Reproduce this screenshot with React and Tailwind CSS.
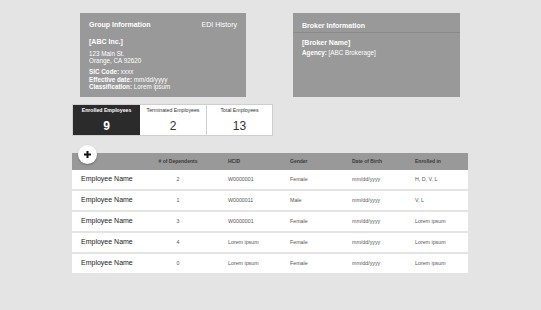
import React from "react";

const rows = [
  { dep: "2", hcid: "W0000001", gender: "Female", dob: "mm/dd/yyyy", enr: "H, D, V, L" },
  { dep: "1", hcid: "W0000011", gender: "Male", dob: "mm/dd/yyyy", enr: "V, L" },
  { dep: "3", hcid: "W0000001", gender: "Female", dob: "mm/dd/yyyy", enr: "Lorem ipsum" },
  { dep: "4", hcid: "Lorem ipsum", gender: "Female", dob: "mm/dd/yyyy", enr: "Lorem ipsum" },
  { dep: "0", hcid: "Lorem ipsum", gender: "Female", dob: "mm/dd/yyyy", enr: "Lorem ipsum" },
];

export default function App() {
  return (
    <div
      className="w-full h-[310px] bg-[#e4e4e4] overflow-hidden"
      style={{ fontFamily: '"Liberation Sans", Arial, sans-serif' }}
    >
      <div className="ml-[72px] w-[396px] pt-[13px]">
        {/* Top cards */}
        <div className="flex ml-[8px] gap-[47px]">
          <div className="w-[166px] h-[84px] bg-[#999999] text-white px-[9px] pt-[8px]">
            <div className="flex justify-between text-[7px] leading-[7px]">
              <span className="font-bold">Group Information</span>
              <span>EDI History</span>
            </div>
            <div className="mt-[10px] text-[7px] leading-[7px] font-bold">[ABC Inc.]</div>
            <div className="mt-[5px] text-[6.3px] leading-[7px]">123 Main St.</div>
            <div className="text-[6.3px] leading-[7px]">Orange, CA 92620</div>
            <div className="mt-[4px] text-[6.3px] leading-[7.5px]">
              <div><span className="font-bold">SIC Code:</span> xxxx</div>
              <div><span className="font-bold">Effective date:</span> mm/dd/yyyy</div>
              <div><span className="font-bold">Classification:</span> Lorem ipsum</div>
            </div>
          </div>
          <div className="w-[167px] h-[84px] bg-[#999999] text-white">
            <div className="h-[20px] border-b border-[#8a8a8a] px-[9px] pt-[8.5px] text-[7px] leading-[7px] font-bold">
              Broker Information
            </div>
            <div className="px-[9px] mt-[5.5px] text-[7px] leading-[7px] font-bold">[Broker Name]</div>
            <div className="px-[9px] mt-[3.5px] text-[6.3px] leading-[7px]">
              <span className="font-bold">Agency:</span> [ABC Brokerage]
            </div>
          </div>
        </div>

        {/* Stats */}
        <div className="mt-[7px] flex w-[201px] h-[32px] border border-[#cfcfcf] bg-white">
          <div className="w-[67px] bg-[#2b2b2b] text-white flex flex-col items-center">
            <div className="mt-[2px] text-[5.2px] leading-[6px] font-bold">Enrolled Employees</div>
            <div className="mt-[6.5px] text-[12px] leading-[12px] font-bold">9</div>
          </div>
          <div className="w-[67px] border-r border-[#cfcfcf] text-[#333] flex flex-col items-center">
            <div className="mt-[2px] text-[5.2px] leading-[6px]">Terminated Employees</div>
            <div className="mt-[6.5px] text-[12px] leading-[12px]">2</div>
          </div>
          <div className="flex-1 text-[#333] flex flex-col items-center">
            <div className="mt-[2px] text-[5.2px] leading-[6px]">Total Employees</div>
            <div className="mt-[6.5px] text-[12px] leading-[12px]">13</div>
          </div>
        </div>

        {/* Table */}
        <div className="relative mt-[17px]">
          <div className="absolute left-[6px] top-[-8px] w-[19px] h-[19px] rounded-full bg-white shadow-[0_1px_2px_rgba(0,0,0,0.3)] flex items-center justify-center">
            <svg width="7" height="7" viewBox="0 0 7 7">
              <rect x="2.5" y="0" width="2" height="7" fill="#111" />
              <rect x="0" y="2.5" width="7" height="2" fill="#111" />
            </svg>
          </div>
          <div className="h-[17px] bg-[#999999] grid grid-cols-[86px_70px_62px_62px_63px_1fr] items-center text-[5px] font-bold text-[#3a3a3a]">
            <div />
            <div className="w-[40px] text-center">
              # of Dependents
            </div>
            <div>HCID</div>
            <div>Gender</div>
            <div>Date of Birth</div>
            <div>Enrolled in</div>
          </div>
          <div className="flex flex-col gap-[2px]">
            {rows.map((r, i) => (
              <div
                key={i}
                className="h-[19px] bg-white grid grid-cols-[86px_70px_62px_62px_63px_1fr] items-center text-[5.3px] text-[#555]"
              >
                <div className="pl-[9px] text-[7px] text-[#222]">Employee Name</div>
                <div className="w-[40px] text-center">{r.dep}</div>
                <div>{r.hcid}</div>
                <div>{r.gender}</div>
                <div>{r.dob}</div>
                <div>{r.enr}</div>
              </div>
            ))}
          </div>
        </div>
      </div>
    </div>
  );
}
